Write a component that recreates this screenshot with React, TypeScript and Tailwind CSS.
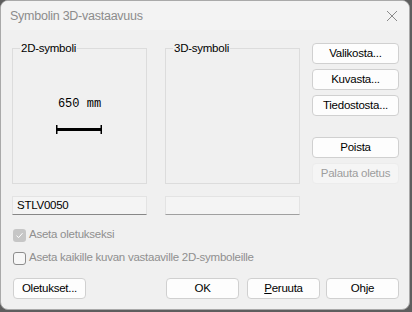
import React from 'react';

const font = { fontFamily: "'Liberation Sans', Arial, sans-serif" };

function Btn({ children, disabled, className = '' }: { children: React.ReactNode; disabled?: boolean; className?: string }) {
  return (
    <button
      className={
        'h-[21px] rounded-[4px] border text-[11.5px] leading-none flex items-center justify-center ' +
        (disabled
          ? 'bg-[#f5f5f5] border-[#ececec] text-[#9d9d9d] '
          : 'bg-[#fdfdfd] border-[#d0d0d0] text-black ') +
        className
      }
    >
      {children}
    </button>
  );
}

function GroupBox({ label, children }: { label: string; children?: React.ReactNode }) {
  return (
    <div className="relative w-[135px] h-[136px] border border-[#dcdcdc]">
      <span className="absolute left-[7px] -top-[8px] bg-[#f0f0f0] px-[1px] text-[11.5px] leading-[14px] text-black">
        {label}
      </span>
      {children}
    </div>
  );
}

export default function App() {
  return (
    <div className="w-[412px] h-[312px] bg-[#5e5e5e] overflow-hidden tracking-[-0.25px]" style={font}>
      <div className="w-[410px] h-[310px] rounded-[8px] border border-[#a9a9a9] bg-[#f0f0f0] overflow-hidden">
        {/* Title bar */}
        <div className="h-[29px] bg-[#f3f3f3] flex items-center justify-between pl-[9px] pr-[9px]">
          <span className="text-[12.5px] text-[#8c8c8c] pt-[1px]">Symbolin 3D-vastaavuus</span>
          <svg width="12" height="12" viewBox="0 0 12 12" className="mr-[2px] mt-[1px]">
            <path d="M1 1L11 11M11 1L1 11" stroke="#8a8a8a" strokeWidth="1" />
          </svg>
        </div>

        <div className="pl-[11px]">
          {/* Top row */}
          <div className="flex">
            <div className="mt-[18px]">
              <GroupBox label="2D-symboli">
                <div className="flex flex-col items-center pt-[48px]">
                  <span className="text-[12px] leading-[14px] text-black tracking-normal" style={{ fontFamily: "'Liberation Mono', monospace" }}>
                    650 mm
                  </span>
                  <svg width="48" height="9" viewBox="0 0 48 9" className="mt-[14px] -ml-[2px]">
                    <rect x="1" y="3" width="46" height="3" fill="#000" />
                    <rect x="1" y="0" width="1.5" height="9" fill="#000" />
                    <rect x="45.5" y="0" width="1.5" height="9" fill="#000" />
                  </svg>
                </div>
              </GroupBox>
            </div>
            <div className="mt-[18px] ml-[18px]">
              <GroupBox label="3D-symboli" />
            </div>
            <div className="ml-[12px] mt-[13px] w-[87px] flex flex-col">
              <Btn>Valikosta...</Btn>
              <Btn className="mt-[5px]">Kuvasta...</Btn>
              <Btn className="mt-[5px]">Tiedostosta...</Btn>
              <Btn className="mt-[21px]">Poista</Btn>
              <Btn disabled className="mt-[5px]">Palauta oletus</Btn>
            </div>
          </div>

          {/* Name fields */}
          <div className="flex mt-[12px]">
            <div className="w-[135px] h-[19px] bg-[#f4f4f4] border border-[#e3e3e3] border-b-[#878787] text-[11.5px] leading-[17px] pl-[4px] text-black">
              STLV0050
            </div>
            <div className="ml-[18px] w-[135px] h-[19px] bg-[#f4f4f4] border border-[#e3e3e3] border-b-[#a0a0a0]" />
          </div>

          {/* Checkboxes */}
          <div className="flex items-center mt-[13px] h-[14px]">
            <div className="w-[13px] h-[13px] rounded-[3px] bg-[#c6c6c6] flex items-center justify-center ml-[1px]">
              <svg width="9" height="9" viewBox="0 0 9 9">
                <path d="M1.5 4.7L3.6 6.6L7.5 2.2" stroke="#fff" strokeWidth="1" fill="none" />
              </svg>
            </div>
            <span className="ml-[3px] text-[11.5px] text-[#8f8f8f]">Aseta oletukseksi</span>
          </div>
          <div className="flex items-center mt-[9px] h-[14px]">
            <div className="w-[13px] h-[13px] rounded-[3px] bg-[#f7f7f7] border border-[#8d8d8d] ml-[1px]" />
            <span className="ml-[3px] text-[11.5px] text-[#8f8f8f]">Aseta kaikille kuvan vastaaville 2D-symboleille</span>
          </div>

          {/* Bottom buttons */}
          <div className="flex mt-[13px]">
            <Btn className="ml-[1px] w-[73px]">Oletukset...</Btn>
            <Btn className="ml-[80px] w-[73px]">OK</Btn>
            <Btn className="ml-[8px] w-[73px]">
              <span>
                <span className="underline">P</span>eruuta
              </span>
            </Btn>
            <Btn className="ml-[6px] w-[73px]">Ohje</Btn>
          </div>
        </div>
      </div>
    </div>
  );
}
